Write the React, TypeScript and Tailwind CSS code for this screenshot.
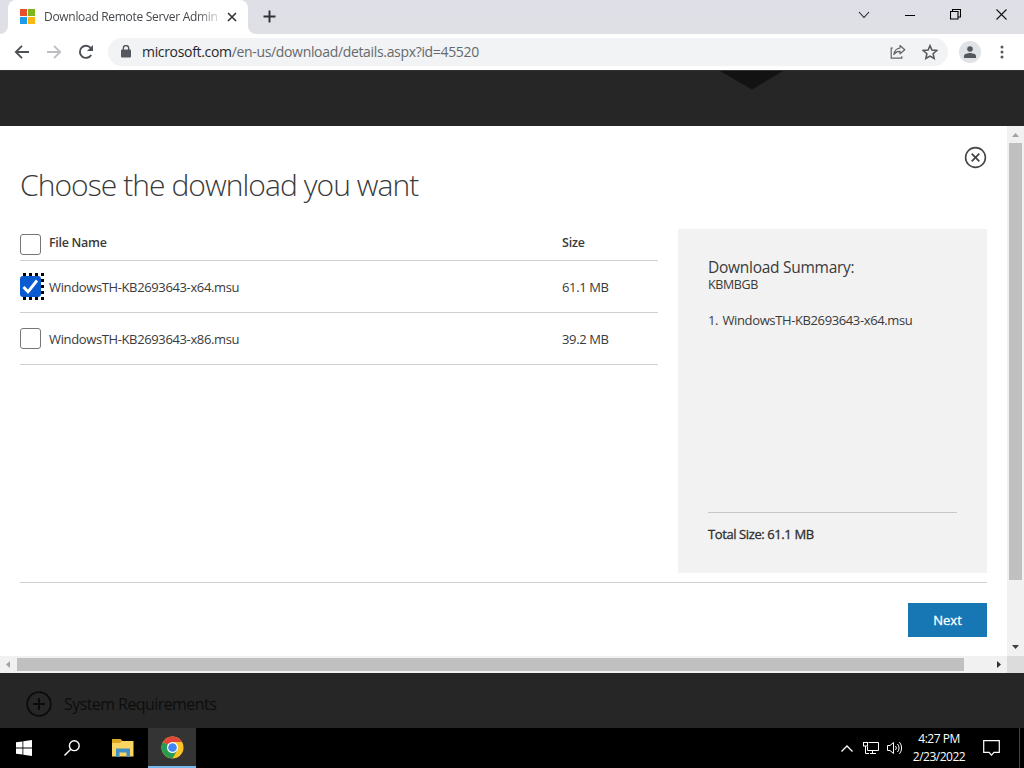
import { useState } from 'react'

const files = [
  { name: 'WindowsTH-KB2693643-x64.msu', size: '61.1 MB' },
  { name: 'WindowsTH-KB2693643-x86.msu', size: '39.2 MB' }
]

const TabStrip = () => (
  <div className="flex h-[34px] bg-gradient-to-b from-[#dfdfe8] to-[#dee0e4]">
    {/* active tab */}
    <div className="relative ml-2 flex h-[34px] w-[240px] items-center rounded-t-lg bg-white pl-3">
      <svg className="absolute bottom-0 -left-2" width="8" height="8" viewBox="0 0 8 8">
        <path d="M8 0v8H0a8 8 0 0 0 8-8z" fill="#fff" />
      </svg>
      <svg className="absolute -right-2 bottom-0" width="8" height="8" viewBox="0 0 8 8">
        <path d="M0 0v8h8a8 8 0 0 1-8-8z" fill="#fff" />
      </svg>
      <div className="mb-px grid size-[15px] shrink-0 grid-cols-2 gap-px">
        <span className="bg-[#e8502c]" />
        <span className="bg-[#7fb51c]" />
        <span className="bg-[#1c9be6]" />
        <span className="bg-[#fcb713]" />
      </div>
      <div className="ml-[9px] w-[173px] text-[12px] tracking-[-0.3px] whitespace-nowrap text-[#45484c] [mask-image:linear-gradient(to_right,#000_88%,rgba(0,0,0,0.25)_100%)]">
        Download Remote Server Admin
      </div>
      <svg className="ml-[10px] shrink-0" width="10" height="10" viewBox="0 0 10 10">
        <path d="M1 1l8 8M9 1L1 9" stroke="#35383b" strokeWidth="1.7" />
      </svg>
    </div>
    <svg className="mt-[10px] ml-[15px]" width="13" height="13" viewBox="0 0 13 13">
      <path d="M6.500 .5v12M.5 6.500h12" stroke="#2f3235" strokeWidth="1.9" />
    </svg>
    {/* window buttons */}
    <div className="ml-auto flex h-[29px] items-center">
      <svg className="mr-[35px]" width="12" height="8" viewBox="0 0 12 8">
        <path d="M1 1l5 5.500L11 1" fill="none" stroke="#222" strokeWidth="1.1" />
      </svg>
      <svg className="mr-[35px]" width="10" height="10" viewBox="0 0 10 10">
        <path d="M0 5.500h10" stroke="#000" />
      </svg>
      <svg className="mr-[35px]" width="11" height="11" viewBox="0 0 11 11">
        <path d="M.5 2.500h7.500v7.500H.5zM2.500 2.500V.5h8v7.500h-2" fill="none" stroke="#000" strokeWidth="1.1" />
      </svg>
      <svg className="mr-[17px]" width="11" height="11" viewBox="0 0 11 11">
        <path d="M.5 .5l10 10M10.500 .5l-10 10" stroke="#111" strokeWidth="1.1" />
      </svg>
    </div>
  </div>
)

const Toolbar = () => (
  <div className="flex h-[37px] items-center border-b border-[#333] bg-white pl-[14px]">
    <svg width="16" height="16" viewBox="0 0 16 16">
      <path d="M15 8H2M8 1.800L1.800 8 8 14.200" fill="none" stroke="#4d5054" strokeWidth="1.8" />
    </svg>
    <svg className="ml-4" width="16" height="16" viewBox="0 0 16 16">
      <path d="M1 8h13M8 1.800L14.200 8 8 14.200" fill="none" stroke="#bcbec1" strokeWidth="1.8" />
    </svg>
    <svg className="ml-4" width="16" height="16" viewBox="0 0 16 16">
      <path d="M13.200 11A6.100 6.100 0 1 1 12.600 3.800" fill="none" stroke="#4d5054" strokeWidth="1.9" />
      <path d="M15 1v6H9z" fill="#4d5054" />
    </svg>
    <div className="ml-[14px] flex h-7 w-[840px] items-center rounded-full bg-[#f1f3f4] pl-[13px]">
      <svg className="mb-px" width="10" height="13" viewBox="0 0 10 13">
        <rect x="0" y="4.500" width="10" height="8" rx="1" fill="#54575b" />
        <path d="M2.300 5V3.200a2.700 2.700 0 0 1 5.400 0V5" fill="none" stroke="#54575b" strokeWidth="1.400" />
      </svg>
      <span className="mb-px ml-[11px] text-[14px] tracking-[-0.33px] whitespace-nowrap text-[#66696d]">
        <span className="text-[#26292c]">microsoft.com</span>/en-us/download/details.aspx?id=45520
      </span>
      <svg className="ml-auto" width="16" height="16" viewBox="0 0 16 16">
        <path d="M3 4H1.200v10.200h10.600v-2" fill="none" stroke="#5f6368" strokeWidth="1.200" />
        <path d="M10 1.500L14.800 5.700 10 9.800V7.400C7 7.300 5.200 8.400 3.900 10.500 4.300 7 6.500 4.500 10 4z" fill="none" stroke="#5f6368" strokeWidth="1.200" strokeLinejoin="round" />
      </svg>
      <svg className="mr-[10px] ml-4" width="16" height="16" viewBox="0 0 16 16">
        <path d="M8 1.600l1.900 4.500 4.900.4-3.700 3.200 1.100 4.800L8 12l-4.200 2.500 1.100-4.800L1.200 6.500l4.900-.4z" fill="none" stroke="#55585c" strokeWidth="1.500" />
      </svg>
    </div>
    <div className="ml-[11px] flex size-[22px] items-center justify-center rounded-full bg-[#dfe2e6]">
      <svg width="12" height="12" viewBox="0 0 12 12" fill="#54585d">
        <circle cx="6" cy="3" r="2.800" />
        <path d="M0 12V9.800C0 7.900 4 7 6 7s6 .9 6 2.800V12z" />
      </svg>
    </div>
    <svg className="ml-[19px]" width="4" height="14" viewBox="0 0 4 14" fill="#55585c">
      <circle cx="2" cy="2" r="1.500" />
      <circle cx="2" cy="7" r="1.500" />
      <circle cx="2" cy="12" r="1.500" />
    </svg>
  </div>
)

const Checkbox = ({ checked, onClick }: { checked: boolean; onClick: () => void }) => (
  <button
    onClick={onClick}
    className={`relative size-[21px] shrink-0 rounded-[3px] ${checked ? 'bg-[#0a5bd0]' : 'border border-[#767676] bg-white'}`}
  >
    {checked && (
      <>
        {/* focus ring */}
        <svg className="absolute -top-[3px] left-0" width="24" height="27" viewBox="0 0 24 27">
          <path d="M3 1.500h21M3 25.500h21" stroke="#000" strokeWidth="3" strokeDasharray="3" />
          <path d="M22.500 0v27" stroke="#000" strokeWidth="3" strokeDasharray="3" />
        </svg>
        <svg className="absolute top-0 left-0" width="21" height="21" viewBox="0 0 21 21">
          <path d="M3.500 11l4.500 4.800L17 4.500" fill="none" stroke="#fff" strokeWidth="2.900" />
        </svg>
      </>
    )}
  </button>
)

const Dialog = () => {
  const [selected, setSelected] = useState<string[]>([files[0].name])

  const toggle = (name: string) =>
    setSelected(selected.includes(name) ? selected.filter((n) => n !== name) : [...selected, name])

  return (
    <div className="grid h-[547px] grid-cols-[1007px_17px] grid-rows-[530px_17px] bg-white text-[13px] text-[#3a3a3a]">
      <div className="flex flex-col pr-5 pl-5">
        <div className="flex h-[103px] justify-between">
          <h1 className="mt-[37px] text-[30px] leading-[44px] font-light tracking-[-0.94px] whitespace-nowrap text-[#3a3a3a]">
            Choose the download you want
          </h1>
          <svg className="mt-5" width="23" height="23" viewBox="0 0 23 23">
            <circle cx="11.500" cy="11.500" r="9.900" fill="none" stroke="#444" strokeWidth="1.600" />
            <path d="M7.700 7.700l7.600 7.600M15.300 7.700l-7.600 7.600" stroke="#444" strokeWidth="1.700" />
          </svg>
        </div>
        <div className="flex h-[354px] border-b border-[#d0d0d0]">
          <div className="w-[638px]">
            <div className="flex h-8 border-b border-[#cfcfcf] pt-[5px] font-semibold">
              <Checkbox checked={false} onClick={() => setSelected(files.map((f) => f.name))} />
              <span className="ml-2 w-[513px] text-[12.500px] leading-[18px] tracking-[-0.3px]">File Name</span>
              <span className="text-[12.500px] leading-[18px] tracking-[-0.2px]">Size</span>
            </div>
            {files.map((file) => (
              <div key={file.name} className="flex h-[52px] border-b border-[#cfcfcf] pt-[15px]">
                <Checkbox checked={selected.includes(file.name)} onClick={() => toggle(file.name)} />
                <span className="ml-2 w-[513px] pt-px leading-[20px] tracking-[-0.37px]">{file.name}</span>
                <span className="pt-px leading-[20px] tracking-[-0.37px]">{file.size}</span>
              </div>
            ))}
          </div>
          {/* summary */}
          <div className="ml-5 flex h-[344px] w-[309px] flex-col bg-[#f2f2f2] px-[30px] pt-[28px]">
            <h2 className="text-[15.500px] leading-[20px] tracking-[-0.27px]">Download Summary:</h2>
            <p className="text-[12.500px] leading-[15px] tracking-[-0.4px]">KBMBGB</p>
            <ol className="mt-[18px] h-[203px] leading-[20px] tracking-[-0.38px]">
              {selected.map((name, index) => (
                <li key={name} className="flex">
                  <span className="w-[14.500px]">{index + 1}.</span>
                  {name}
                </li>
              ))}
            </ol>
            <div className="-mt-px border-t border-[#c8c8c8] pt-[11px] leading-[20px] tracking-[-0.4px] text-[#2f2f2f] [-webkit-text-stroke:0.3px]">
              Total Size: 61.1 MB
            </div>
          </div>
        </div>
        <button className="mt-5 h-[34px] w-[79px] self-end bg-[#1777b5] pt-px text-white [-webkit-text-stroke:0.3px]">Next</button>
      </div>
      {/* vertical scrollbar */}
      <div className="flex flex-col items-center bg-[#f1f1f1] py-[7px]">
        <svg width="7" height="4" viewBox="0 0 7 4">
          <path d="M0 4l3.500-4L7 4z" fill="#a3a3a3" />
        </svg>
        <div className="mt-[6px] h-[437px] w-[13px] bg-[#c0c0c0]" />
        <svg className="mt-auto" width="7" height="4" viewBox="0 0 7 4">
          <path d="M0 0l3.500 4L7 0z" fill="#404040" />
        </svg>
      </div>
      {/* horizontal scrollbar */}
      <div className="flex items-center bg-[#f1f1f1] pr-[6px] pl-[6px]">
        <svg width="4" height="7" viewBox="0 0 4 7">
          <path d="M4 0L0 3.500 4 7z" fill="#a3a3a3" />
        </svg>
        <div className="ml-[7px] h-[13px] w-[947px] bg-[#c0c0c0]" />
        <svg className="ml-auto" width="4" height="7" viewBox="0 0 4 7">
          <path d="M0 0l4 3.500L0 7z" fill="#303030" />
        </svg>
      </div>
      <div className="bg-[#dcdcdc]" />
    </div>
  )
}

const Taskbar = () => (
  <div className="flex h-10 bg-black text-white">
    <div className="flex w-12 items-center justify-center">
      <svg width="16" height="16" viewBox="0 0 16 16" fill="#fff">
        <path d="M0 2.300l6.500-.9v6.200H0zM7.300 1.300L16 0v7.600H7.300zM0 8.400h6.500v6.200L0 13.700zM7.300 8.400H16V16l-8.700-1.300z" />
      </svg>
    </div>
    <div className="flex w-12 items-center justify-center">
      <svg width="16" height="16" viewBox="0 0 16 16" fill="none" stroke="#fff" strokeWidth="1.400">
        <circle cx="10.300" cy="5.700" r="4.900" />
        <path d="M6.800 9.200L.5 15.500" />
      </svg>
    </div>
    <div className="flex w-[52px] items-center justify-center">
      <svg className="ml-px" width="22" height="18" viewBox="0 0 22 18">
        <path d="M0 0h8.500l2 2H21v5H0z" fill="#dca526" />
        <path d="M0 4h8l2-2h11.500v15.500H0z" fill="#fcd462" />
        <path d="M4 9.500h14v8.500h-3.500v-4.500h-7V18H4z" fill="#418fc5" />
      </svg>
    </div>
    <div className="flex h-10 w-12 items-center justify-center border-b-2 border-[#76b9ed] bg-[#343434]">
      <svg width="23" height="23" viewBox="0 0 48 48">
        <circle cx="24" cy="24" r="23" fill="#fbc525" />
        <path d="M24 24L4.100 12.500A23 23 0 0 0 24 47l10-17.200z" fill="#279b51" />
        <path d="M24 24L4.100 12.500A23 23 0 0 1 43.900 12.500H24z" fill="#e2453a" />
        <circle cx="24" cy="24" r="11.500" fill="#fff" />
        <circle cx="24" cy="24" r="9" fill="#4285f4" />
      </svg>
    </div>
    {/* tray */}
    <div className="ml-auto flex items-center">
      <svg width="12" height="7" viewBox="0 0 12 7">
        <path d="M.5 6.500L6 1l5.500 5.500" fill="none" stroke="#fff" strokeWidth="1.300" />
      </svg>
      <svg className="ml-[10px]" width="17" height="14" viewBox="0 0 17 14" fill="none" stroke="#fff">
        <path d="M5.500 1.500h10v8h-11V5.500M7 12.500h6M9.500 9.500v3M2.500 5v7.500H6" />
        <rect x=".5" y="1.500" width="4" height="3.500" />
      </svg>
      <svg className="ml-[7px]" width="17" height="14" viewBox="0 0 17 14" fill="none" stroke="#fff">
        <path d="M.5 4.500H3l3.500-3v11l-3.500-3H.500zM8.500 5a3 3 0 0 1 0 4M10.500 3a6 6 0 0 1 0 8M12.500 1.200a9 9 0 0 1 0 11.600" />
      </svg>
      <div className="ml-[5px] w-[60px] text-center text-[12px] leading-[18px] tracking-[-0.5px] whitespace-nowrap">
        <div>4:27 PM</div>
        <div>2/23/2022</div>
      </div>
      <svg className="mr-[19px] ml-[14px]" width="17" height="16" viewBox="0 0 17 16">
        <path d="M.7 .7h15.600v11.600H11l-2.500 2.800L6 12.300H.7z" fill="none" stroke="#fff" strokeWidth="1.200" />
      </svg>
      <div className="h-10 w-[5px] border-l border-[#444]" />
    </div>
  </div>
)

const App = () => {
  return (
    <div className="flex h-[768px] w-[1024px] flex-col overflow-hidden bg-[#262626] font-['Open_Sans',sans-serif]">
      <TabStrip />
      <Toolbar />
      <div className="h-[55px] bg-[#262626]">
        <svg className="ml-[720px]" width="63" height="19" viewBox="0 0 63 19">
          <path d="M0 0h63L32 18.500z" fill="#121212" />
        </svg>
      </div>
      <Dialog />
      <div className="flex h-[55px] items-center bg-[#262626] pt-[7px] pb-px pl-[26px]">
        <svg width="26" height="26" viewBox="0 0 26 26" fill="none" stroke="#0b0b0b">
          <circle cx="13" cy="13" r="11.800" strokeWidth="1.800" />
          <path d="M13 7v12M7 13h12" strokeWidth="2" />
        </svg>
        <span className="ml-[12px] text-[16px] tracking-[-0.57px] text-[#0d0d0d]">System Requirements</span>
      </div>
      <Taskbar />
    </div>
  )
}

export default App
